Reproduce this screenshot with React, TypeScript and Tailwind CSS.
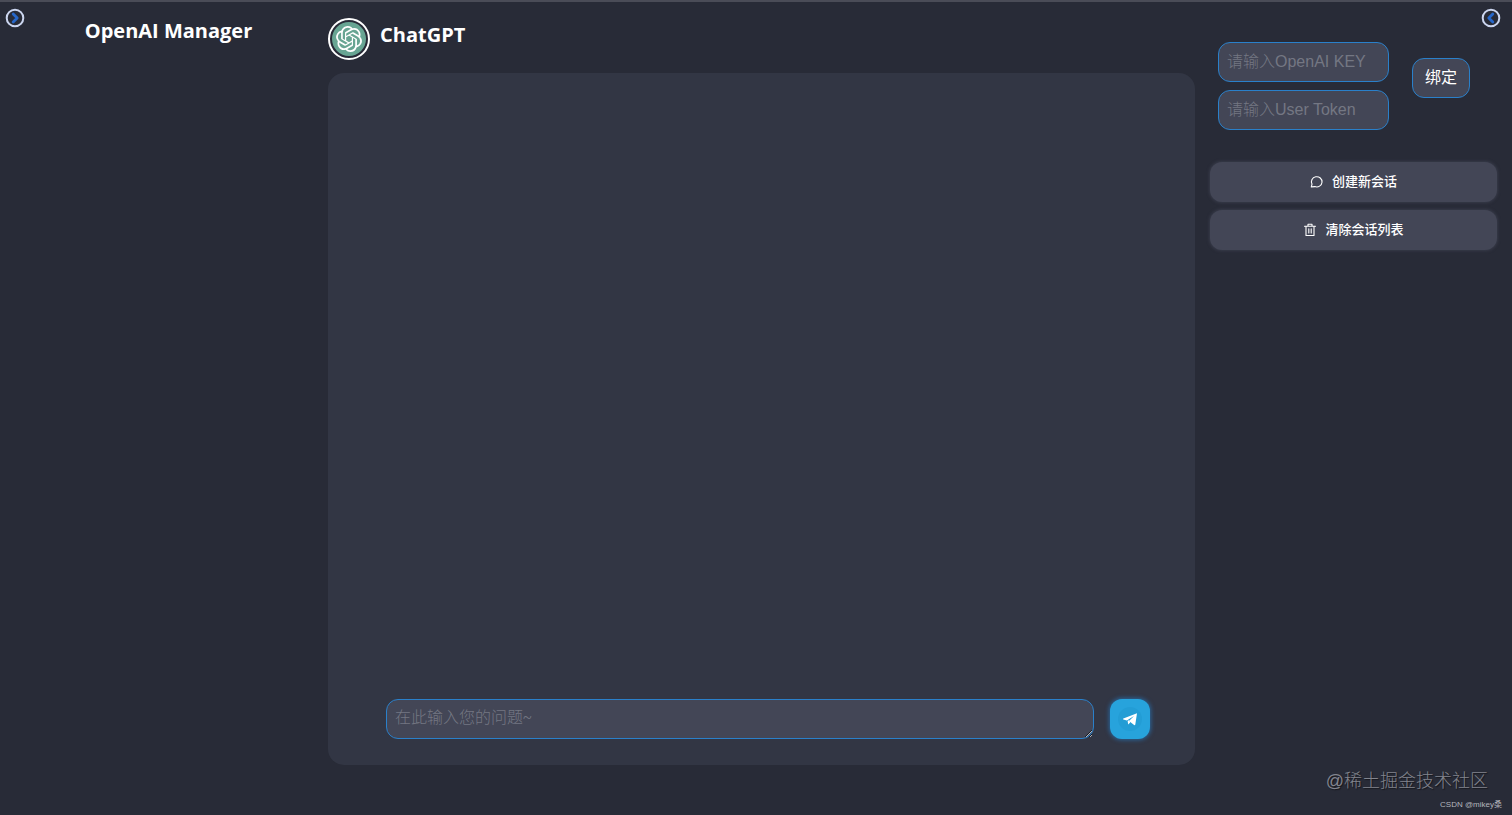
import { useState } from 'react';
import { SiOpenai } from 'react-icons/si';

const fieldClass =
  'h-10 rounded-xl border border-[#2a80ca] bg-[#434656] px-2 text-base font-light text-white outline-none placeholder:text-[#747783]';

const actionClass =
  'flex h-10 w-full items-center justify-center gap-2 rounded-xl bg-[#434656] font-["Open_Sans","Noto_Sans_CJK_SC",sans-serif] text-[13px] font-medium text-white shadow-[0_0_3px_1px_rgba(67,70,86,0.6)]';

function ToggleIcon({ direction }: { direction: 'left' | 'right' }) {
  return (
    <svg viewBox="0 0 20 20" className="h-5 w-5" fill="none" aria-hidden>
      <circle cx="10" cy="10" r="8.3" stroke="#ccd6f0" strokeWidth="2" />
      <path
        d={direction === 'right' ? 'M8.2 6l4 4-4 4' : 'M11.8 6l-4 4 4 4'}
        stroke="#2767c9"
        strokeWidth="2.8"
        strokeLinecap="round"
        strokeLinejoin="round"
      />
    </svg>
  );
}

function ChatIcon() {
  return (
    <svg viewBox="0 0 14 14" className="h-3.5 w-3.5" fill="none" aria-hidden>
      <path
        d="M1.3 11.9 2 9.1A5.3 5.1 0 1 1 4.9 11.6z"
        stroke="currentColor"
        strokeWidth="1.1"
        strokeLinejoin="round"
      />
    </svg>
  );
}

function TrashIcon() {
  return (
    <svg viewBox="0 0 14 14" className="h-3.5 w-3.5" fill="none" aria-hidden>
      <path
        d="M1.5 3.2h11M5 3V1.3h4V3M3 3.4v9.1h8V3.4M5.8 5.7v4.2M8.2 5.7v4.2"
        stroke="currentColor"
        strokeWidth="1.1"
        strokeLinecap="round"
        strokeLinejoin="round"
      />
    </svg>
  );
}

function PlaneIcon() {
  return (
    <svg viewBox="0 0 16 16" className="h-4 w-4" fill="currentColor" aria-hidden>
      <path d="M15 2.2 1.4 7.4Q.3 8 1.4 8.5L4.8 9.5 12 5.1 7 10.1 12.1 14Q13 14.5 13.3 13.4z" />
      <path d="M5.6 9.8 7.2 9.2 8.2 11.4 6.2 13.4z" />
    </svg>
  );
}

export default function App() {
  const [apiKey, setApiKey] = useState('');
  const [userToken, setUserToken] = useState('');
  const [question, setQuestion] = useState('');

  return (
    <div className='relative grid min-h-screen grid-cols-[328fr_867fr_317fr] border-t-2 border-[#4a4c57] bg-[#282b37] font-["Liberation_Sans","Noto_Sans_CJK_SC",sans-serif] text-white'>
      <aside className="flex items-start pt-1.5 pr-4 pl-[5px]">
        <button type="button" aria-label="Expand left panel">
          <ToggleIcon direction="right" />
        </button>
        <h1 className='flex-1 pt-[9px] text-center font-["Open_Sans",sans-serif] text-xl font-bold'>
          OpenAI Manager
        </h1>
      </aside>

      <main className="flex flex-col pt-4 pb-[50px]">
        <header className="flex items-start gap-2.5">
          <span className="flex h-[42px] w-[42px] items-center justify-center rounded-full border-2 border-white p-0.5">
            <span className="flex h-full w-full items-center justify-center rounded-full bg-[#68a593]">
              <SiOpenai className="h-[26px] w-[26px]" />
            </span>
          </span>
          <h2 className='pt-[3px] font-["Open_Sans",sans-serif] text-xl font-bold'>ChatGPT</h2>
        </header>

        <section className="mt-[13px] flex flex-1 flex-col justify-end rounded-2xl bg-[#323644] pr-[45px] pb-[26px] pl-[58px]">
          <form
            className="flex items-center gap-4"
            onSubmit={(event) => event.preventDefault()}
          >
            <textarea
              aria-label="Question"
              rows={1}
              value={question}
              onChange={(event) => setQuestion(event.target.value)}
              placeholder="在此输入您的问题~"
              className='h-10 flex-1 resize rounded-xl border border-[#2a80ca] bg-[#434656] px-2 py-1.5 font-["Liberation_Serif","Noto_Sans_CJK_SC",serif] text-base font-light outline-none placeholder:text-[#747783]'
            />
            <button
              type="submit"
              aria-label="Send"
              className="flex h-10 w-10 items-center justify-center rounded-xl bg-[#27a3dc] shadow-[0_0_4px_1px_rgba(39,121,191,0.7)]"
            >
              <span className="flex h-6 w-6 items-center justify-center rounded-full bg-[#239dd5]">
                <PlaneIcon />
              </span>
            </button>
          </form>
        </section>
      </main>

      <aside className="flex flex-col px-[15px] pt-1.5">
        <button type="button" aria-label="Expand right panel" className="-mr-1 self-end">
          <ToggleIcon direction="left" />
        </button>

        <form
          className="mt-3.5 flex items-start pl-2"
          onSubmit={(event) => event.preventDefault()}
        >
          <div className="flex w-[171px] flex-col gap-2">
            <input
              type="text"
              aria-label="OpenAI KEY"
              value={apiKey}
              onChange={(event) => setApiKey(event.target.value)}
              placeholder="请输入OpenAI KEY"
              className={fieldClass}
            />
            <input
              type="text"
              aria-label="User Token"
              value={userToken}
              onChange={(event) => setUserToken(event.target.value)}
              placeholder="请输入User Token"
              className={fieldClass}
            />
          </div>
          <button
            type="submit"
            className="mt-4 ml-[23px] h-10 w-[58px] rounded-xl border border-[#2a80ca] bg-[#434656] text-base"
          >
            绑定
          </button>
        </form>

        <div className="mt-8 flex flex-col gap-2">
          <button type="button" className={actionClass}>
            <ChatIcon />
            创建新会话
          </button>
          <button type="button" className={actionClass}>
            <TrashIcon />
            清除会话列表
          </button>
        </div>
      </aside>

      <div className="pointer-events-none absolute right-2.5 bottom-1 flex flex-col items-end gap-1.5">
        <span className="pr-3.5 text-lg leading-6 font-light text-[#82848d] [text-shadow:1px_1px_1px_rgba(0,0,0,0.5)]">
          @稀土掘金技术社区
        </span>
        <span className="text-[8px] leading-3 text-[#b4b6bd]">CSDN @mikey桑</span>
      </div>
    </div>
  );
}
